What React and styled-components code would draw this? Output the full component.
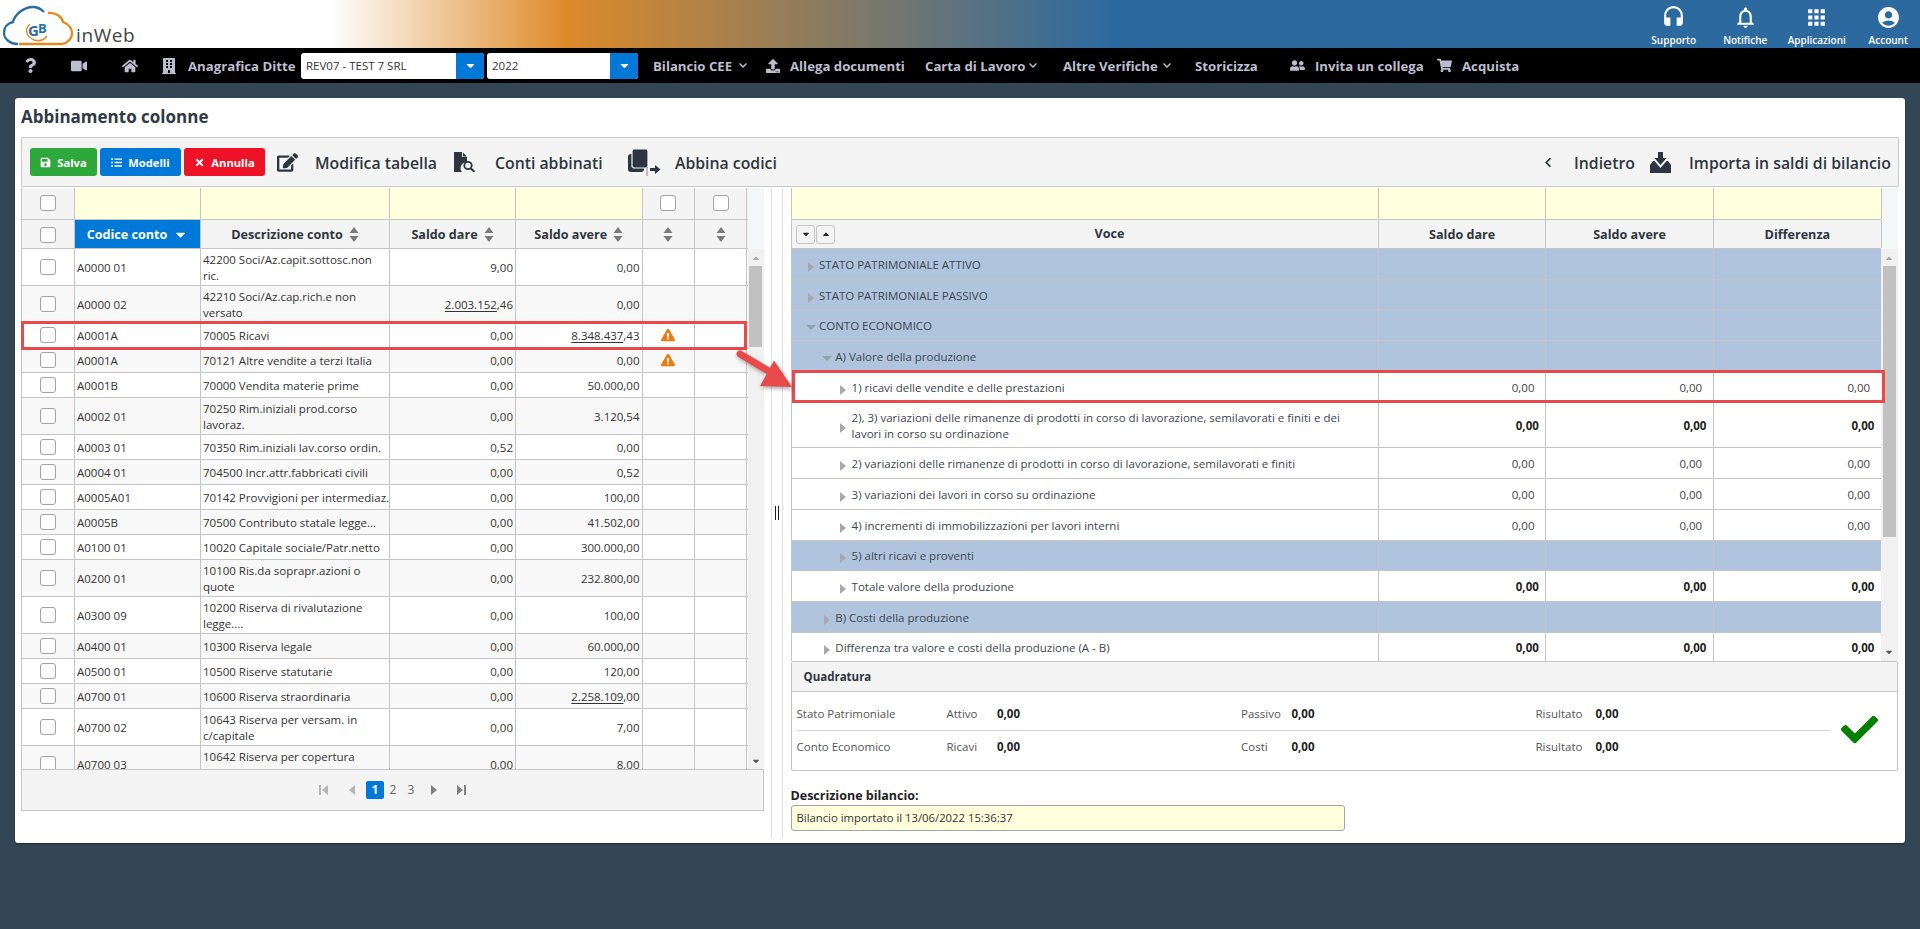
import React from "react";
import styled, { createGlobalStyle } from "styled-components";
import {
  FaQuestion, FaVideo, FaHome, FaBuilding, FaChevronDown, FaUpload, FaUserFriends, FaShoppingCart,
  FaSave, FaListUl, FaTimes, FaEdit, FaChevronLeft, FaExclamationTriangle, FaCheck, FaCaretDown, FaCaretUp,
} from "react-icons/fa";
import { MdHeadset, MdNotificationsNone, MdApps, MdAccountCircle } from "react-icons/md";

const Global = createGlobalStyle`
  * { box-sizing: border-box; }
  html, body { margin: 0; height: 100%; }
  body { background: #334656; font-family: "Open Sans", "Noto Sans", sans-serif; font-size: 11.5px; color: #333; overflow: hidden; }
`;

const Page = styled.div`position: relative; width: 1920px; height: 929px; overflow: hidden;`;

const TopBar = styled.header`
  height: 48px; display: flex; justify-content: space-between;
  background: linear-gradient(to right, #fff 0, #fff 17.2%, #dd8a2a 29.5%, #2c699f 58%, #2c699f 100%);
`;
const Logo = styled.div`display: flex; align-items: flex-end; padding-left: 3px; height: 48px;`;
const LogoWord = styled.span`
  font-family: "Open Sans", sans-serif; font-size: 19px; color: #444; letter-spacing: .6px;
  line-height: 19px; margin: 0 0 3px 0;
`;
const TopActions = styled.div`display: flex; margin-right: -4px;`;
const TopAction = styled.div`
  width: 71.5px; display: flex; flex-direction: column; align-items: center; color: #fff;
  font-size: 10px; font-weight: 600; padding-top: 5px;
  svg { font-size: 25px; display: block; }
  span { line-height: 14px; margin-top: 3px; white-space: nowrap; }
`;

const NavBar = styled.nav`height: 35px; background: #000; display: flex; align-items: center; color: #bcbed0;`;
const NavSlot = styled.span`
  display: inline-flex; justify-content: center; align-items: center; flex: none;
  width: ${p => p.$w}px; margin-left: ${p => p.$ml}px; font-size: ${p => p.$size || 16}px;
`;
const NavText = styled.span`
  flex: none; width: ${p => p.$w}px; margin-left: ${p => p.$ml}px; font-size: 13.2px; font-weight: 700; white-space: nowrap;
`;
const NavChevron = styled(FaChevronDown)`flex: none; font-size: 9px; margin-left: ${p => p.$ml}px; width: 10px;`;
const Select = styled.div`
  flex: none; display: flex; width: ${p => p.$w}px; height: 26px; margin-left: ${p => p.$ml}px;
  border-radius: 3px; overflow: hidden; background: #fff;
`;
const SelectValue = styled.div`
  flex: 1; display: flex; align-items: center; padding-left: ${p => p.$pl}px; color: #333; font-size: 11.5px; white-space: nowrap;
`;
const SelectButton = styled.div`
  width: 28px; background: #0078d7; color: #fff; display: flex; align-items: center; justify-content: center; font-size: 13px;
`;

const Card = styled.main`
  position: relative; margin: 15px 15px 0; width: 1890px; height: 745px; background: #fff; border-radius: 3px;
  padding: 0 6px; box-shadow: 0 1px 2px rgba(0,0,0,.4);
`;
const Title = styled.h1`
  margin: 0; height: 39px; display: flex; align-items: center; font-size: 17px; font-weight: 700; color: #2e3a46; padding-bottom: 2px;
`;
const Toolbar = styled.div`
  height: 50px; width: 1878px; background: #f4f4f4; border: 1px solid #c8c8c8; border-radius: 2px;
  display: flex; align-items: center; padding: 0 8px;
`;
const ActionButton = styled.div`
  flex: none; width: ${p => p.$w}px; margin-left: ${p => p.$ml}px; height: 28px; background: ${p => p.$bg}; border-radius: 3px;
  color: #fff; font-weight: 700; font-size: 11.2px; display: flex; align-items: center; justify-content: center; gap: 6px;
  svg { font-size: 11px; }
`;
const ToolIcon = styled.span`
  flex: none; display: inline-flex; align-items: center; justify-content: center; color: #2d3640;
  width: ${p => p.$w}px; margin-left: ${p => p.$ml}px; font-size: ${p => p.$size || 20}px;
`;
const ToolText = styled.span`
  flex: none; width: ${p => p.$w}px; margin-left: ${p => p.$ml}px; white-space: nowrap; font-size: 15.8px; font-weight: 600; color: #2d3640;
  padding-top: 1px;
`;
const Spacer = styled.div`flex: 1;`;

const Panes = styled.div`display: flex; align-items: flex-start; margin-top: .5px;`;
const LeftPane = styled.section`flex: none; width: 743px;`;
const RightPane = styled.section`flex: none; width: 1107.5px;`;
const Splitter = styled.div`
  flex: none; width: 26.5px; height: 650px; padding-left: 7px; display: flex;
`;
const SplitLines = styled.div`
  width: 12px; height: 100%; border-left: 1px solid #dfe3e6; border-right: 1px solid #dfe3e6;
  display: flex; align-items: center; justify-content: center;
`;
const SplitHandle = styled.div`width: 4px; height: 14px; border-left: 1.5px solid #222; border-right: 1.5px solid #222;`;

const HeadWrap = styled.div`display: flex; background: #f4f7f8;`;
const GridRows = styled.div`flex: none; width: ${p => p.$w}px; border-left: 1px solid #c5c5c5;`;
const HeaderGap = styled.div`flex: 1;`;

const leftCols = "53px 126px 189px 126px 126.5px 52.7px 52.3px";
const rightCols = "587.5px 167.3px 167.6px 168px";

const Row = styled.div`
  display: grid; grid-template-columns: ${p => p.$cols}; min-height: ${p => p.$min}px;
  border-bottom: 1px solid #c5c5c5; background: ${p => p.$bg || "#fff"};
`;
const ZebraRow = styled(Row)`&:nth-child(even) { background: #f8f8f8; }`;
const Cell = styled.div`
  display: flex; align-items: center; justify-content: ${p => p.$j || "flex-start"}; min-width: 0; white-space: nowrap;
  border-right: 1px solid #c5c5c5; padding: 3px 2px 1px; line-height: 16px;
  background: ${p => p.$bg || "transparent"};
`;
const HeadCell = styled(Cell)`
  justify-content: center; gap: 6px; font-weight: 700; font-size: 12.6px; color: ${p => p.$active ? "#fff" : "#2d3640"};
  background: ${p => p.$active ? "#0078d7" : "#f4f4f4"}; padding: 1px 2px 0;
`;
const CheckSlot = styled(Cell)`padding: 0;`;
const Check = styled.span`
  display: block; width: 16px; height: 16px; background: #fff; border: 1px solid #a3a3a3; border-radius: 3px;
`;
const SortIcon = styled.svg`flex: none; width: 10px; height: 15px; fill: #7a7a7a;`;
const Warn = styled(FaExclamationTriangle)`color: #f07a10; font-size: 14px;`;
const Under = styled.u`text-underline-offset: 2px;`;

const LeftBody = styled.div`display: flex; height: 520px;`;
const RowsClip = styled.div`flex: none; width: ${p => p.$w}px; overflow: hidden; border-left: 1px solid #c5c5c5;`;
const Scrollbar = styled.div`
  flex: 1; background: #f1f1f1; display: flex; flex-direction: column; align-items: center; min-width: 0;
`;
const ScrollArrow = styled.div`
  height: 17px; display: flex; align-items: center; justify-content: center; font-size: 10px;
  color: ${p => p.$dim ? "#a8a8a8" : "#555"};
`;
const ScrollThumb = styled.div`width: 13px; height: ${p => p.$h}px; background: #c1c1c1;`;
const ScrollFill = styled.div`flex: 1;`;

const Pager = styled.div`
  height: 41.5px; border: 1px solid #c5c5c5; background: #f4f4f4; display: flex; align-items: center; justify-content: center; color: #777;
`;
const PageIcon = styled.svg`
  flex: none; width: 14px; height: 12px; margin-left: ${p => p.$ml}px; fill: ${p => p.$dim ? "#b5b5b5" : "#808080"};
`;
const PageNum = styled.span`
  flex: none; width: 18px; height: 18px; display: flex; align-items: center; justify-content: center; border-radius: 2px;
  font-size: 12px; margin-left: ${p => p.$ml || 0}px; font-weight: ${p => p.$on ? 700 : 400};
  background: ${p => p.$on ? "#0078d7" : "transparent"}; color: ${p => p.$on ? "#fff" : "#666"};
`;

const TreeBody = styled.div`display: flex; height: 411.5px;`;
const TreeText = styled.div`
  display: flex; align-items: center; padding-left: ${p => 13.5 + p.$depth * 16.3}px; white-space: nowrap; color: #3c4650;
`;
const TreeCell = styled(Cell)`padding: 7.5px 0 5.5px;`;
const Caret = styled.span`
  flex: none; width: 11px; margin-right: 3px; display: flex; justify-content: center;
  padding-top: ${p => p.$open ? 3 : 4}px;
  &::before {
    content: ""; display: block; width: 0; height: 0;
    ${p => p.$open
      ? "border-left: 5px solid transparent; border-right: 5px solid transparent; border-top: 5px solid #94a1b0;"
      : "border-top: 5px solid transparent; border-bottom: 5px solid transparent; border-left: 6px solid #a5a9ad;"}
  }
`;
const Amount = styled(Cell)`
  justify-content: flex-end; padding: 2px ${p => p.$bold ? 6.5 : 10.8}px 0 0;
  font-weight: ${p => p.$bold ? 700 : 400}; color: ${p => p.$bold ? "#222" : "#444"};
`;
const MiniButtons = styled.div`display: flex; gap: 1px; padding-left: 4.5px; flex: none;`;
const MiniButton = styled.div`
  width: 19px; height: 19px; border: 1px solid #c5c5c5; border-radius: 3px; background: #f4f4f4;
  display: flex; align-items: center; justify-content: center; font-size: 10px; color: #222;
`;
const VoceCell = styled(HeadCell)`justify-content: flex-start; padding: 0;`;
const VoceLabel = styled.span`flex: 1; text-align: center;`;

const Quadratura = styled.div`border: 1px solid #c5c5c5; border-radius: 2px;`;
const QuadHead = styled.div`
  height: 30px; background: #f4f4f4; border-bottom: 1px solid #c5c5c5; display: flex; align-items: center; padding-left: 12px;
  font-weight: 700; font-size: 11.5px; color: #2d3640;
`;
const QuadBody = styled.div`display: flex; padding: 6px 0 8px 5px; align-items: center;`;
const QuadRows = styled.div`flex: none; width: 1034px;`;
const QuadRow = styled.div`
  display: grid; grid-template-columns: 150px 50.5px 244px 50.5px 244px 60px 235px; height: 32px; align-items: center;
  & + & { border-top: 1px solid #d5d5d5; }
  color: #555;
`;
const QuadValue = styled.b`color: #222;`;
const QuadCheck = styled.div`flex: 1; display: flex; justify-content: center; color: #008000; font-size: 37px; padding-right: 8px;`;
const DescLabel = styled.div`margin: 18px 0 0 0; font-weight: 700; font-size: 12.5px; line-height: 14px; color: #222; height: 16px;`;
const DescInput = styled.div`
  width: 554.5px; height: 26px; background: #ffffdd; border: 1px solid #a5a5a5; border-radius: 3px; display: flex; align-items: center;
  padding-left: 5px; color: #333; font-size: 11.3px;
`;

const MarkLeft = styled.div`
  position: absolute; left: 21px; top: 321px; width: 726px; height: 29px; border: 3px solid #e84a4a; pointer-events: none;
`;
const MarkRight = styled.div`
  position: absolute; left: 792px; top: 370px; width: 1092.5px; height: 33px; border: 3px solid #e84a4a; pointer-events: none;
`;
const Arrow = styled.svg`
  position: absolute; left: 730px; top: 345px; width: 70px; height: 52px; overflow: visible;
  filter: drop-shadow(1px 2px 2px rgba(0,0,0,.35));
`;

const Sort = () => (
  <SortIcon viewBox="0 0 10 15"><path d="M5 0l4.5 6h-9zM5 15L.5 9h9z" /></SortIcon>
);

const leftRows = [
  ["A0000 01", ["42200 Soci/Az.capit.sottosc.non", "ric."], "9,00", "0,00"],
  ["A0000 02", ["42210 Soci/Az.cap.rich.e non", "versato"], <><Under>2.003.152</Under>,46</>, "0,00"],
  ["A0001A", ["70005 Ricavi"], "0,00", <><Under>8.348.437</Under>,43</>, true],
  ["A0001A", ["70121 Altre vendite a terzi Italia"], "0,00", "0,00", true],
  ["A0001B", ["70000 Vendita materie prime"], "0,00", "50.000,00"],
  ["A0002 01", ["70250 Rim.iniziali prod.corso", "lavoraz."], "0,00", "3.120,54"],
  ["A0003 01", ["70350 Rim.iniziali lav.corso ordin."], "0,52", "0,00"],
  ["A0004 01", ["704500 Incr.attr.fabbricati civili"], "0,00", "0,52"],
  ["A0005A01", ["70142 Provvigioni per intermediaz."], "0,00", "100,00"],
  ["A0005B", ["70500 Contributo statale legge..."], "0,00", "41.502,00"],
  ["A0100 01", ["10020 Capitale sociale/Patr.netto"], "0,00", "300.000,00"],
  ["A0200 01", ["10100 Ris.da soprapr.azioni o", "quote"], "0,00", "232.800,00"],
  ["A0300 09", ["10200 Riserva di rivalutazione", "legge...."], "0,00", "100,00"],
  ["A0400 01", ["10300 Riserva legale"], "0,00", "60.000,00"],
  ["A0500 01", ["10500 Riserve statutarie"], "0,00", "120,00"],
  ["A0700 01", ["10600 Riserva straordinaria"], "0,00", <><Under>2.258.109</Under>,00</>],
  ["A0700 02", ["10643 Riserva per versam. in", "c/capitale"], "0,00", "7,00"],
  ["A0700 03", ["10642 Riserva per copertura", "perdite"], "0,00", "8,00"],
];

const treeRows = [
  { t: ["STATO PATRIMONIALE ATTIVO"], d: 0, blue: true },
  { t: ["STATO PATRIMONIALE PASSIVO"], d: 0, blue: true },
  { t: ["CONTO ECONOMICO"], d: 0, blue: true, open: true },
  { t: ["A) Valore della produzione"], d: 1, blue: true, open: true },
  { t: ["1) ricavi delle vendite e delle prestazioni"], d: 2, num: "n" },
  { t: ["2), 3) variazioni delle rimanenze di prodotti in corso di lavorazione, semilavorati e finiti e dei", "lavori in corso su ordinazione"], d: 2, num: "b" },
  { t: ["2) variazioni delle rimanenze di prodotti in corso di lavorazione, semilavorati e finiti"], d: 2, num: "n" },
  { t: ["3) variazioni dei lavori in corso su ordinazione"], d: 2, num: "n" },
  { t: ["4) incrementi di immobilizzazioni per lavori interni"], d: 2, num: "n" },
  { t: ["5) altri ricavi e proventi"], d: 2, blue: true },
  { t: ["Totale valore della produzione"], d: 2, num: "b" },
  { t: ["B) Costi della produzione"], d: 1, blue: true },
  { t: ["Differenza tra valore e costi della produzione (A - B)"], d: 1, num: "b" },
];

const Lines = ({ lines }) => (
  <div>{lines.map((l, i) => <div key={i}>{l}</div>)}</div>
);

export default function App() {
  return (
    <Page>
      <Global />
      <TopBar>
        <Logo>
          <svg width="73" height="48" viewBox="0 0 73 48" aria-label="GB logo">
            <path d="M15 44C7 44 1 39 1 33C1 27 5 23 10 22C12 14 21 7 30 7C34 7 38 9 41 12" fill="none" stroke="#2a6ca6" strokeWidth="2.3" />
            <path d="M45 13C53 12 59 17 60 22C65 24 69 28 69 33C69 39 64 43.5 59 44L16 44" fill="none" stroke="#e8871e" strokeWidth="2.3" />
            <path d="M27 24C22 28 22 36 31 40C36 41.5 41 40 44 36" fill="none" stroke="#e8871e" strokeWidth="1.4" />
            <text x="25" y="36" fontFamily="Open Sans, sans-serif" fontSize="15" fontWeight="700" fill="#2a6ca6">G</text>
            <text x="35" y="33" fontFamily="Open Sans, sans-serif" fontSize="13" fontWeight="700" fill="#2a6ca6">B</text>
          </svg>
          <LogoWord>inWeb</LogoWord>
        </Logo>
        <TopActions>
          <TopAction><MdHeadset /><span>Supporto</span></TopAction>
          <TopAction><MdNotificationsNone /><span>Notifiche</span></TopAction>
          <TopAction><MdApps /><span>Applicazioni</span></TopAction>
          <TopAction><MdAccountCircle /><span>Account</span></TopAction>
        </TopActions>
      </TopBar>

      <NavBar>
        <NavSlot $w={20} $ml={20} $size={15}><FaQuestion /></NavSlot>
        <NavSlot $w={20} $ml={29}><FaVideo /></NavSlot>
        <NavSlot $w={20} $ml={31}><FaHome /></NavSlot>
        <NavSlot $w={18} $ml={20}><FaBuilding /></NavSlot>
        <NavText $w={107} $ml={10}>Anagrafica Ditte</NavText>
        <Select $w={183} $ml={6}>
          <SelectValue $pl={5}>REV07 - TEST 7 SRL</SelectValue>
          <SelectButton><FaCaretDown /></SelectButton>
        </Select>
        <Select $w={151} $ml={3}>
          <SelectValue $pl={5}>2022</SelectValue>
          <SelectButton><FaCaretDown /></SelectButton>
        </Select>
        <NavText $w={80} $ml={15}>Bilancio CEE</NavText>
        <NavChevron $ml={5} />
        <NavSlot $w={15} $ml={17} $size={14}><FaUpload /></NavSlot>
        <NavText $w={116} $ml={10}>Allega documenti</NavText>
        <NavText $w={100} $ml={19}>Carta di Lavoro</NavText>
        <NavChevron $ml={3} />
        <NavText $w={94} $ml={25}>Altre Verifiche</NavText>
        <NavChevron $ml={5} />
        <NavText $w={63} $ml={23}>Storicizza</NavText>
        <NavSlot $w={19} $ml={30} $size={15}><FaUserFriends /></NavSlot>
        <NavText $w={110} $ml={8}>Invita un collega</NavText>
        <NavSlot $w={17} $ml={11} $size={15}><FaShoppingCart /></NavSlot>
        <NavText $w={57} $ml={9}>Acquista</NavText>
      </NavBar>

      <Card>
        <Title>Abbinamento colonne</Title>
        <Toolbar>
          <ActionButton $w={67} $ml={0} $bg="#2fa83b"><FaSave />Salva</ActionButton>
          <ActionButton $w={81} $ml={3} $bg="#0078d7"><FaListUl />Modelli</ActionButton>
          <ActionButton $w={81} $ml={3} $bg="#ee1226"><FaTimes />Annulla</ActionButton>
          <ToolIcon $w={22} $ml={11} $size={21}><FaEdit /></ToolIcon>
          <ToolText $w={122} $ml={17}>Modifica tabella</ToolText>
          <ToolIcon $w={24} $ml={16}>
            <svg width="24" height="20" viewBox="0 0 24 20" fill="#2d3640">
              <path d="M1 0h8v5h5v5.2a6 6 0 0 0-5 9.8H1z" />
              <path d="M10 0.5l4 4h-4z" />
              <circle cx="15" cy="13.5" r="3.7" fill="none" stroke="#2d3640" strokeWidth="1.8" />
              <path d="M17.5 16.2l4 3.6" stroke="#2d3640" strokeWidth="2.2" />
            </svg>
          </ToolIcon>
          <ToolText $w={106} $ml={18}>Conti abbinati</ToolText>
          <ToolIcon $w={34} $ml={26}>
            <svg width="34" height="28" viewBox="0 0 34 28" fill="#2d3640">
              <rect x="1" y="6" width="16" height="18" rx="3" />
              <rect x="5" y="1" width="16" height="19" rx="2" stroke="#f4f4f4" strokeWidth="1.2" />
              <path d="M20 19v9" stroke="#9a9a9a" strokeWidth="1.2" />
              <path d="M23 20h5v-3l5.5 4.5-5.5 4.5v-3h-5z" />
            </svg>
          </ToolIcon>
          <ToolText $w={104} $ml={14}>Abbina codici</ToolText>
          <Spacer />
          <ToolIcon $w={10} $ml={0} $size={11}><FaChevronLeft /></ToolIcon>
          <ToolText $w={59} $ml={21}>Indietro</ToolText>
          <ToolIcon $w={21} $ml={17}>
            <svg width="21" height="21" viewBox="0 0 21 21" fill="#2d3640">
              <path d="M8 0h5v6h3.5l-6 7-6-7H8z" />
              <path d="M0 13l3-4h1.5l6 7 6-7H18l3 4v8H0z" />
            </svg>
          </ToolIcon>
          <ToolText $w={201} $ml={18}>Importa in saldi di bilancio</ToolText>
        </Toolbar>

        <Panes>
          <LeftPane>
            <HeadWrap>
              <GridRows $w={726.5}>
                <Row $cols={leftCols} $min={32.5} $bg="#f4f4f4">
                  <CheckSlot $j="center"><Check /></CheckSlot>
                  <Cell $bg="#ffffdd" /><Cell $bg="#ffffdd" /><Cell $bg="#ffffdd" /><Cell $bg="#ffffdd" />
                  <CheckSlot $j="center"><Check /></CheckSlot>
                  <CheckSlot $j="center"><Check /></CheckSlot>
                </Row>
                <Row $cols={leftCols} $min={29} $bg="#f4f4f4">
                  <HeadCell><Check /></HeadCell>
                  <HeadCell $active>Codice conto <FaCaretDown size={15} /></HeadCell>
                  <HeadCell>Descrizione conto <Sort /></HeadCell>
                  <HeadCell>Saldo dare <Sort /></HeadCell>
                  <HeadCell>Saldo avere <Sort /></HeadCell>
                  <HeadCell><Sort /></HeadCell>
                  <HeadCell><Sort /></HeadCell>
                </Row>
              </GridRows>
              <HeaderGap />
            </HeadWrap>
            <LeftBody>
              <RowsClip $w={726.5}>
                {leftRows.map((r, i) => (
                  <ZebraRow key={i} $cols={leftCols} $min={25}>
                    <CheckSlot $j="center"><Check /></CheckSlot>
                    <Cell>{r[0]}</Cell>
                    <Cell><Lines lines={r[1]} /></Cell>
                    <Cell $j="flex-end">{r[2]}</Cell>
                    <Cell $j="flex-end">{r[3]}</Cell>
                    <CheckSlot $j="center">{r[4] && <Warn />}</CheckSlot>
                    <Cell />
                  </ZebraRow>
                ))}
              </RowsClip>
              <Scrollbar>
                <ScrollArrow $dim><FaCaretUp /></ScrollArrow>
                <ScrollThumb $h={81} />
                <ScrollFill />
                <ScrollArrow><FaCaretDown /></ScrollArrow>
              </Scrollbar>
            </LeftBody>
            <Pager>
              <PageIcon $dim $ml={0} viewBox="0 0 14 12"><path d="M3 1h2v10H3zM12 1v10L6 6z" /></PageIcon>
              <PageIcon $dim $ml={15} viewBox="0 0 14 12"><path d="M10 1v10L4 6z" /></PageIcon>
              <PageNum $on $ml={7}>1</PageNum>
              <PageNum>2</PageNum>
              <PageNum>3</PageNum>
              <PageIcon $ml={7} viewBox="0 0 14 12"><path d="M4 1v10l6-5z" /></PageIcon>
              <PageIcon $ml={14} viewBox="0 0 14 12"><path d="M2 1v10l6-5zM9 1h2v10H9z" /></PageIcon>
            </Pager>
          </LeftPane>

          <Splitter>
            <SplitLines><SplitHandle /></SplitLines>
          </Splitter>

          <RightPane>
            <HeadWrap>
              <GridRows $w={1090.4}>
                <Row $cols={rightCols} $min={32.5} $bg="#ffffdd">
                  <Cell /><Cell /><Cell /><Cell />
                </Row>
                <Row $cols={rightCols} $min={29} $bg="#f4f4f4">
                  <VoceCell>
                    <MiniButtons>
                      <MiniButton><FaCaretDown /></MiniButton>
                      <MiniButton><FaCaretUp /></MiniButton>
                    </MiniButtons>
                    <VoceLabel>Voce</VoceLabel>
                  </VoceCell>
                  <HeadCell>Saldo dare</HeadCell>
                  <HeadCell>Saldo avere</HeadCell>
                  <HeadCell>Differenza</HeadCell>
                </Row>
              </GridRows>
              <HeaderGap />
            </HeadWrap>
            <TreeBody>
              <RowsClip $w={1090.4}>
                {treeRows.map((r, i) => (
                  <Row key={i} $cols={rightCols} $min={30.7} $bg={r.blue ? "#b0c4de" : "#fff"}>
                    <TreeCell>
                      <TreeText $depth={r.d}>
                        <Caret $open={r.open} />
                        <Lines lines={r.t} />
                      </TreeText>
                    </TreeCell>
                    {[0, 1, 2].map(k => (
                      <Amount key={k} $bold={r.num === "b"}>{r.num ? "0,00" : ""}</Amount>
                    ))}
                  </Row>
                ))}
              </RowsClip>
              <Scrollbar>
                <ScrollArrow $dim><FaCaretUp /></ScrollArrow>
                <ScrollThumb $h={271} />
                <ScrollFill />
                <ScrollArrow><FaCaretDown /></ScrollArrow>
              </Scrollbar>
            </TreeBody>
            <Quadratura>
              <QuadHead>Quadratura</QuadHead>
              <QuadBody>
                <QuadRows>
                  <QuadRow>
                    <span>Stato Patrimoniale</span><span>Attivo</span><QuadValue>0,00</QuadValue>
                    <span>Passivo</span><QuadValue>0,00</QuadValue>
                    <span>Risultato</span><QuadValue>0,00</QuadValue>
                  </QuadRow>
                  <QuadRow>
                    <span>Conto Economico</span><span>Ricavi</span><QuadValue>0,00</QuadValue>
                    <span>Costi</span><QuadValue>0,00</QuadValue>
                    <span>Risultato</span><QuadValue>0,00</QuadValue>
                  </QuadRow>
                </QuadRows>
                <QuadCheck><FaCheck /></QuadCheck>
              </QuadBody>
            </Quadratura>
            <DescLabel>Descrizione bilancio:</DescLabel>
            <DescInput>Bilancio importato il 13/06/2022 15:36:37</DescInput>
          </RightPane>
        </Panes>
      </Card>

      <MarkLeft />
      <MarkRight />
      <Arrow viewBox="0 0 70 52">
        <path d="M10 9L42 28" stroke="#e84a4a" strokeWidth="7" strokeLinecap="round" />
        <path d="M44 15.5L62 42L30 41z" fill="#e84a4a" />
      </Arrow>
    </Page>
  );
}
